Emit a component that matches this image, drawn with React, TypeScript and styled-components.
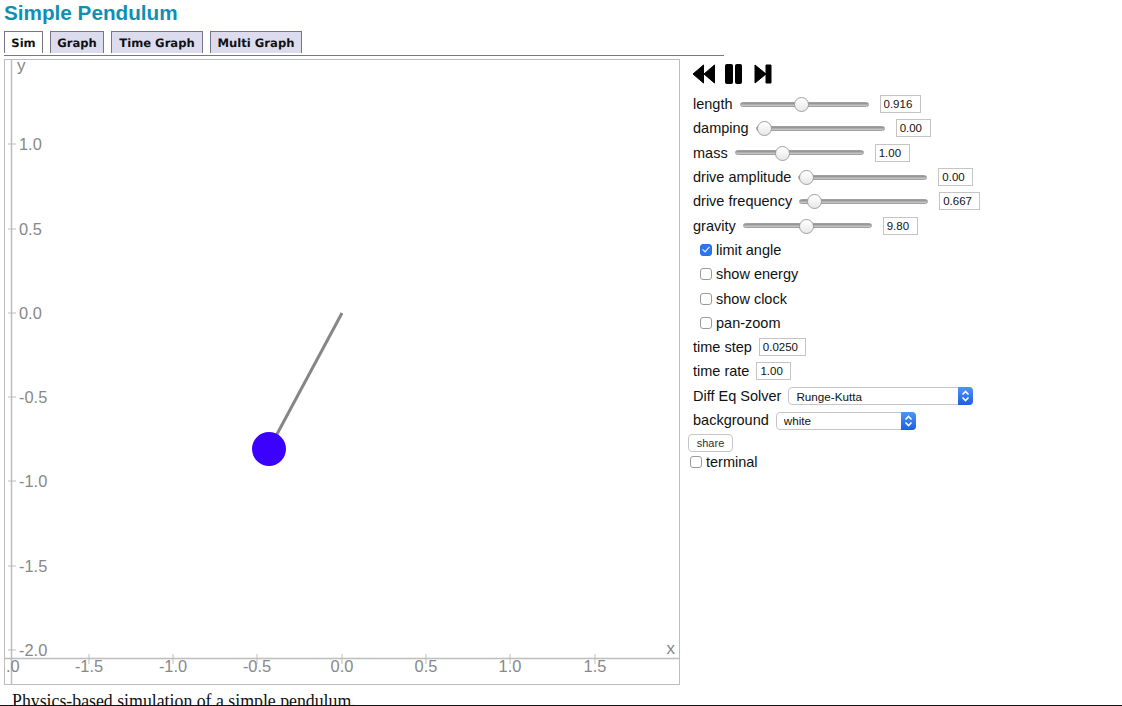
import { FC } from 'react'
import styled, { createGlobalStyle } from 'styled-components'

const GlobalStyle = createGlobalStyle`
	html, body {
		margin: 0;
		padding: 0;
		background: #fff;
	}
`

const Page = styled.div`
	box-sizing: border-box;
	height: 706px;
	overflow: hidden;
	border-bottom: 1px solid #111;
	padding: 0 0 0 4px;
	font-family: 'Liberation Sans', Arial, sans-serif;
	color: #111;
`

const Title = styled.h1`
	margin: 0;
	height: 31px;
	font-size: 20.7px;
	line-height: 26px;
	font-weight: bold;
	color: #0f8fb3;
`

const TabBar = styled.div`
	width: 720px;
	height: 25px;
	box-sizing: border-box;
	display: flex;
	gap: 7px;
	border-bottom: 1px solid #77758c;
`

const Tab = styled.div<{ $active?: boolean; $width: number }>`
	box-sizing: border-box;
	height: 22px;
	width: ${(p) => p.$width}px;
	display: flex;
	align-items: center;
	justify-content: center;
	border: 1px solid #77758c;
	border-bottom: none;
	background: ${(p) => (p.$active ? '#fff' : '#dddcef')};
	font-family: 'DejaVu Sans', Verdana, sans-serif;
	font-size: 11.6px;
	font-weight: bold;
	text-rendering: geometricPrecision;
	color: #111;
`

const Content = styled.div`
	display: flex;
	margin-top: 3px;
`

const GraphBox = styled.div`
	flex: none;
	width: 676px;
	height: 626px;
	box-sizing: border-box;
	border: 1px solid #bdbdbd;
	svg {
		display: block;
		overflow: visible;
	}
`

const Controls = styled.div`
	margin-left: 8px;
	display: flex;
	flex-direction: column;
`

const Transport = styled.div`
	display: flex;
	height: 33px;
	padding: 5px 0 0 4px;
	box-sizing: border-box;
	svg {
		display: block;
	}
`

const Row = styled.div<{ $indent?: number }>`
	height: 24.3px;
	display: flex;
	align-items: center;
	padding-left: ${(p) => p.$indent ?? 5}px;
	font-size: 14.5px;
	white-space: nowrap;
`

const Slider = styled.input`
	appearance: none;
	width: 129px;
	height: 16px;
	margin: 0 11px 0 7px;
	background: transparent;
	&::-webkit-slider-runnable-track {
		height: 5px;
		border-radius: 3px;
		background: linear-gradient(#8c8c8c, #cfcfcf);
		border: 0.5px solid #a0a0a0;
	}
	&::-webkit-slider-thumb {
		appearance: none;
		box-sizing: border-box;
		width: 15px;
		height: 15px;
		margin-top: -5.5px;
		border-radius: 50%;
		border: 1px solid #a0a0a0;
		background: linear-gradient(#fff, #e8e8e8);
	}
`

const NumberBox = styled.input<{ $width: number; $gap?: number }>`
	box-sizing: border-box;
	width: ${(p) => p.$width}px;
	height: 18px;
	margin-left: ${(p) => p.$gap ?? 0}px;
	padding: 0 3px;
	border: 1px solid #c4c4c4;
	border-radius: 0;
	outline: none;
	font-family: 'Liberation Sans', Arial, sans-serif;
	font-size: 11.5px;
	color: #111;
`

const CheckBox = styled.input`
	appearance: none;
	box-sizing: border-box;
	flex: none;
	width: 12px;
	height: 12px;
	margin: 0 4px 0 0;
	border: 1px solid #9b9b9b;
	border-radius: 3px;
	background: #fff;
	display: grid;
	place-items: center;
	&:checked {
		border-color: #2a6fe8;
		background: #2f76ee;
	}
	&:checked::after {
		content: '';
		width: 3px;
		height: 6px;
		margin-top: -2px;
		border: solid #fff;
		border-width: 0 1.6px 1.6px 0;
		transform: rotate(42deg);
	}
`

const SelectWrap = styled.div<{ $width: number }>`
	position: relative;
	width: ${(p) => p.$width}px;
	height: 18px;
	margin: 1px 0 0 7px;
`

const Select = styled.select`
	appearance: none;
	box-sizing: border-box;
	width: 100%;
	height: 100%;
	padding: 0 0 0 7px;
	border: 1px solid #c6c6c6;
	border-radius: 4px;
	background: #fff;
	outline: none;
	font-family: 'Liberation Sans', Arial, sans-serif;
	font-size: 11.7px;
	color: #111;
`

const SelectArrow = styled.span`
	position: absolute;
	top: 0;
	right: 0;
	bottom: 0;
	width: 15px;
	display: flex;
	align-items: center;
	justify-content: center;
	border-radius: 0 4px 4px 0;
	background: linear-gradient(#4f94f8, #1c5fe6);
`

const ShareRow = styled.div`
	height: 16.5px;
	padding-top: 1.5px;
`

const ShareButton = styled.button`
	box-sizing: border-box;
	display: block;
	width: 45px;
	height: 18px;
	padding: 0;
	border: 1px solid #c6c6c6;
	border-radius: 4px;
	background: #fff;
	font-family: 'Liberation Sans', Arial, sans-serif;
	font-size: 11px;
	color: #333;
`

const Description = styled.p`
	margin: 5px 0 0 8px;
	font-family: 'Liberation Serif', Georgia, serif;
	font-size: 17.8px;
	line-height: 22px;
	color: #111;
`

const AxisText = styled.text<{ $size?: number }>`
	font-family: 'Liberation Sans', Arial, sans-serif;
	font-size: ${(p) => p.$size ?? 16.4}px;
	fill: #888;
`

// value is where the thumb sits, out of 1000
const sliders = [
	{ label: 'length', value: 480, text: '0.916', width: 41 },
	{ label: 'damping', value: 0, text: '0.00', width: 35 },
	{ label: 'mass', value: 355, text: '1.00', width: 35 },
	{ label: 'drive amplitude', value: 0, text: '0.00', width: 35 },
	{ label: 'drive frequency', value: 60, text: '0.667', width: 41 },
	{ label: 'gravity', value: 495, text: '9.80', width: 35 },
]

const checks = [
	{ label: 'limit angle', checked: true },
	{ label: 'show energy', checked: false },
	{ label: 'show clock', checked: false },
	{ label: 'pan-zoom', checked: false },
]

const yTicks = [
	{ y: 84, label: '1.0' },
	{ y: 169, label: '0.5' },
	{ y: 253, label: '0.0' },
	{ y: 337, label: '-0.5' },
	{ y: 421, label: '-1.0' },
	{ y: 506, label: '-1.5' },
	{ y: 590, label: '-2.0' },
]

const xTicks = [
	{ x: 84, label: '-1.5' },
	{ x: 168, label: '-1.0' },
	{ x: 252, label: '-0.5' },
	{ x: 337, label: '0.0' },
	{ x: 421, label: '0.5' },
	{ x: 505, label: '1.0' },
	{ x: 590, label: '1.5' },
]

const Chevrons: FC = () => (
	<svg width="9" height="14" viewBox="0 0 9 14" fill="none" stroke="#fff" strokeWidth="1.6">
		<path d="M1.5 5.5 L4.5 2.5 L7.5 5.5" />
		<path d="M1.5 8.5 L4.5 11.5 L7.5 8.5" />
	</svg>
)

const Graph: FC = () => (
	<svg width="674" height="624" viewBox="0 0 674 624">
		<line x1="6.5" y1="0" x2="6.5" y2="624" stroke="#bdbdbd" strokeWidth="1.5" />
		<line x1="0" y1="598.5" x2="674" y2="598.5" stroke="#bdbdbd" strokeWidth="1.5" />
		{yTicks.map((t) => (
			<g key={t.label}>
				<line x1="3" y1={t.y} x2="11" y2={t.y} stroke="#bdbdbd" />
				<AxisText x="14" y={t.y + 6}>
					{t.label}
				</AxisText>
			</g>
		))}
		{xTicks.map((t) => (
			<g key={t.label}>
				<line x1={t.x} y1="594" x2={t.x} y2="604" stroke="#bdbdbd" />
				<AxisText x={t.x} y="612" textAnchor="middle">
					{t.label}
				</AxisText>
			</g>
		))}
		<AxisText x="1" y="612">
			.0
		</AxisText>
		<AxisText x="12" y="10.5" $size={17}>
			y
		</AxisText>
		<AxisText x="661.5" y="594" $size={17}>
			x
		</AxisText>
		<line x1="337" y1="253" x2="264" y2="389" stroke="#868686" strokeWidth="3" />
		<circle cx="264" cy="389" r="17" fill="#3c00ff" />
	</svg>
)

const App: FC = () => {
	return (
		<Page>
			<GlobalStyle />
			<Title>Simple Pendulum</Title>
			<TabBar>
				<Tab $active $width={39}>Sim</Tab>
				<Tab $width={54}>Graph</Tab>
				<Tab $width={92}>Time Graph</Tab>
				<Tab $width={92}>Multi Graph</Tab>
			</TabBar>
			<Content>
				<GraphBox>
					<Graph />
				</GraphBox>
				<Controls>
					<Transport>
						<svg width="80" height="20" viewBox="0 0 80 20" fill="#000" stroke="#000" strokeLinejoin="round">
							<path d="M11.5 1 V19 L1 10 Z" />
							<path d="M22.5 1 V19 L12 10 Z" />
							<rect x="33.5" y="0.5" width="7" height="19" rx="1" />
							<rect x="43.5" y="0.5" width="6" height="19" rx="1" />
							<path d="M63 1 L74 10 V1 H79 V19 H74 V10 L63 19 Z" />
						</svg>
					</Transport>
					{sliders.map((s) => (
						<Row key={s.label}>
							{s.label}
							<Slider type="range" min={0} max={1000} defaultValue={s.value} />
							<NumberBox $width={s.width} defaultValue={s.text} />
						</Row>
					))}
					{checks.map((c) => (
						<Row key={c.label} $indent={12}>
							<CheckBox type="checkbox" defaultChecked={c.checked} />
							{c.label}
						</Row>
					))}
					<Row>
						time step
						<NumberBox $width={47} $gap={7} defaultValue="0.0250" />
					</Row>
					<Row>
						time rate
						<NumberBox $width={35} $gap={7} defaultValue="1.00" />
					</Row>
					<Row>
						Diff Eq Solver
						<SelectWrap $width={185}>
							<Select defaultValue="Runge-Kutta">
								<option>Runge-Kutta</option>
							</Select>
							<SelectArrow>
								<Chevrons />
							</SelectArrow>
						</SelectWrap>
					</Row>
					<Row>
						background
						<SelectWrap $width={140}>
							<Select defaultValue="white">
								<option>white</option>
							</Select>
							<SelectArrow>
								<Chevrons />
							</SelectArrow>
						</SelectWrap>
					</Row>
					<ShareRow>
						<ShareButton>share</ShareButton>
					</ShareRow>
					<Row $indent={2}>
						<CheckBox type="checkbox" />
						terminal
					</Row>
				</Controls>
			</Content>
			<Description>Physics-based simulation of a simple pendulum.</Description>
		</Page>
	)
}

export default App
